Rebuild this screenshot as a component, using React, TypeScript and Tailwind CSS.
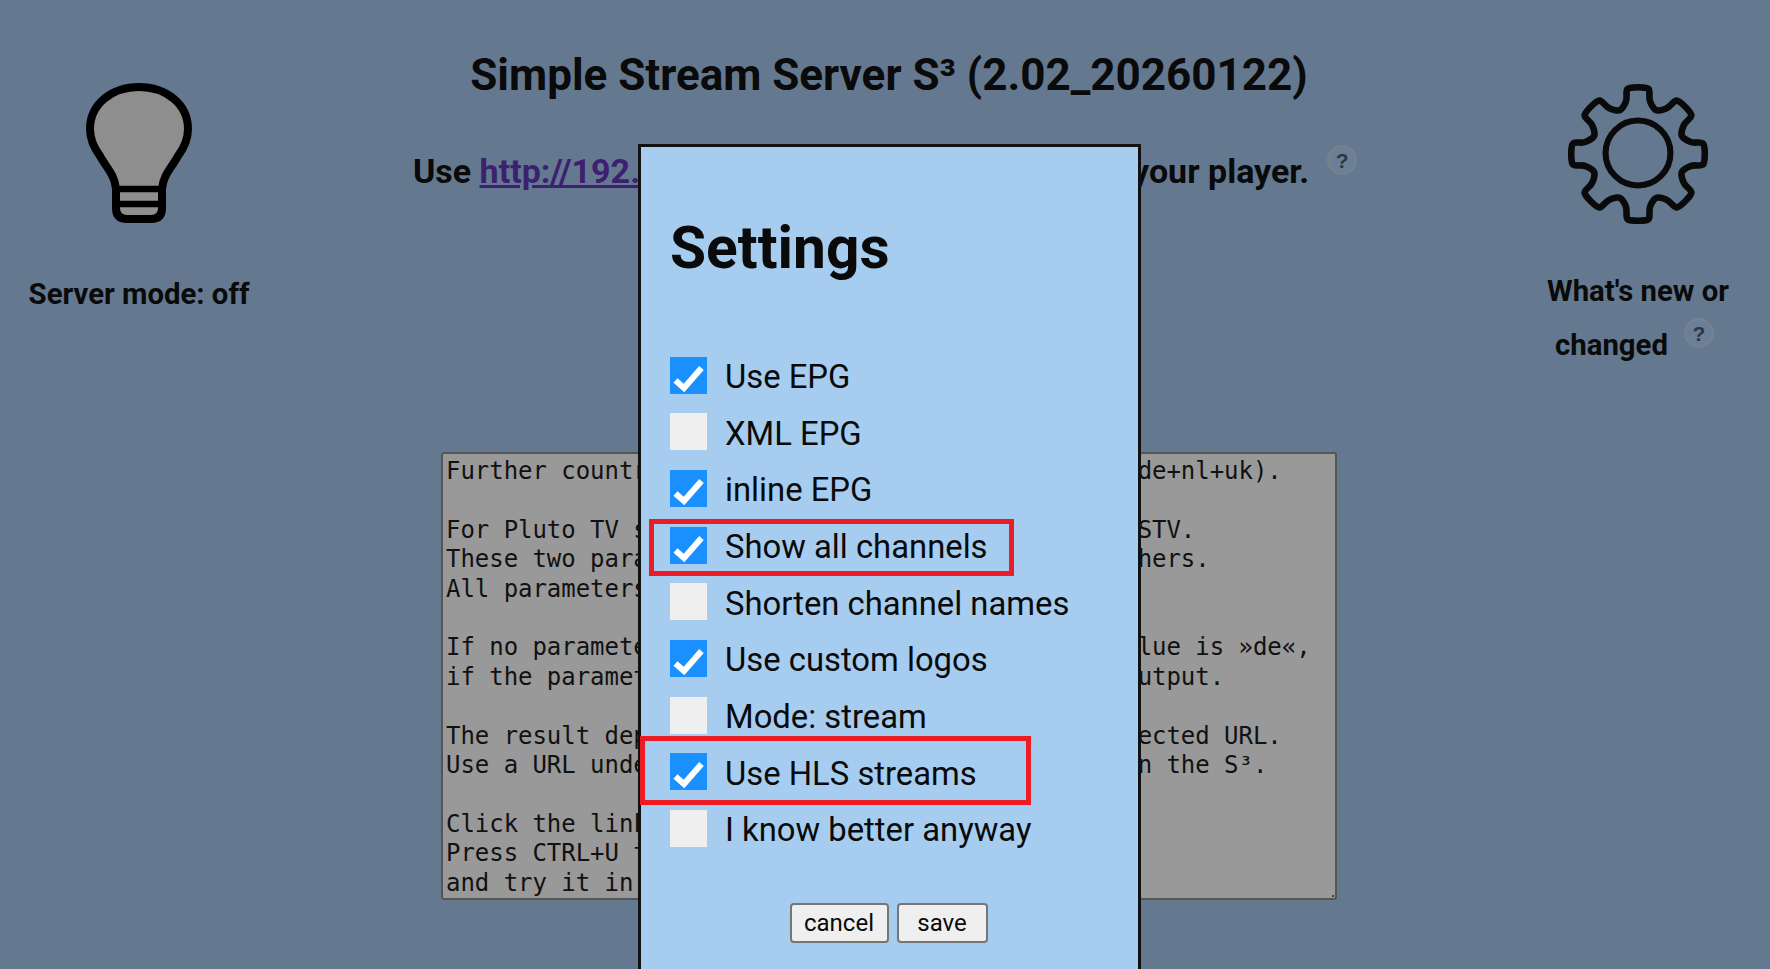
import React from "react";

const SERVER_HELP = `Further countries can be selected via URL (e.g. de+nl+uk).

For Pluto TV set parameters region and type for STV.
These two parameters can be combined with the others.
All parameters are optional.

If no parameter is given, the default country value is »de«,
if the parameter is invalid, you will get zero output.

The result depends on the parameters and the selected URL.
Use a URL under which the channels are running on the S³.

Click the link and view the source.
Press CTRL+U to see the source of the page
and try it in another browser.`;

const OPTIONS = [
  { label: "Use EPG", checked: true },
  { label: "XML EPG", checked: false },
  { label: "inline EPG", checked: true },
  { label: "Show all channels", checked: true },
  { label: "Shorten channel names", checked: false },
  { label: "Use custom logos", checked: true },
  { label: "Mode: stream", checked: false },
  { label: "Use HLS streams", checked: true },
  { label: "I know better anyway", checked: false },
];

// gear outline: polygon of polar points, corners smoothed with quadratics
function gearPath() {
  const c = 70;
  const pts: [number, number][] = [];
  const local: [number, number][] = [
    [46, -22.5],
    [49.5, -16],
    [55, -11.5],
    [63.5, -10.5],
    [66.5, -8],
    [66.5, 8],
    [63.5, 10.5],
    [55, 11.5],
    [49.5, 16],
  ];
  for (let i = 0; i < 8; i++) {
    const base = i * 45;
    local.forEach(([r, a]) => {
      const rad = ((base + a - 90) * Math.PI) / 180;
      pts.push([c + r * Math.cos(rad), c + r * Math.sin(rad)]);
    });
  }
  const mid = (a: [number, number], b: [number, number]) => [(a[0] + b[0]) / 2, (a[1] + b[1]) / 2];
  const start = mid(pts[pts.length - 1], pts[0]);
  let d = `M${start[0].toFixed(2)} ${start[1].toFixed(2)}`;
  pts.forEach((p, i) => {
    const m = mid(p, pts[(i + 1) % pts.length]);
    d += `Q${p[0].toFixed(2)} ${p[1].toFixed(2)} ${m[0].toFixed(2)} ${m[1].toFixed(2)}`;
  });
  return d + "Z";
}

function BulbIcon() {
  return (
    <svg width="106" height="140" viewBox="0 0 106 140" fill="none" stroke="#000" strokeWidth="8">
      <path
        fill="#8e8e8e"
        d="M30 106C29 92 20 84 14 73C8 65 4 56 4 46C4 21 26 4 53 4C80 4 102 21 102 46C102 56 98 65 92 73C86 84 77 92 76 106V125Q76 136 65 136H41Q30 136 30 125Z"
      />
      <path strokeWidth="6.500" d="M30 106H76M30 121H76" />
    </svg>
  );
}

function GearIcon() {
  return (
    <svg width="144" height="144" viewBox="-1 -1 142 142" fill="none" stroke="#0a0a0a" strokeWidth="6.500">
      <path d={gearPath()} />
      <circle cx="70" cy="69" r="32" strokeWidth="6" />
    </svg>
  );
}

function HelpBadge() {
  return (
    <span className="inline-flex h-[30px] w-[30px] shrink-0 items-center justify-center rounded-full border-2 border-[#76838f] bg-[#6b8097] font-['Liberation_Sans',sans-serif] text-[21px] font-bold leading-none text-[#2f3640]">
      ?
    </span>
  );
}

function OptionRow({ label, checked }: { label: string; checked: boolean }) {
  return (
    <div className="flex h-[56.67px] items-center gap-[18px]">
      <span
        className={
          checked
            ? "flex h-[37px] w-[37px] items-center justify-center bg-[#1a90ff]"
            : "flex h-[37px] w-[37px] items-center justify-center bg-[#efefef]"
        }
      >
        {checked && (
          <svg width="37" height="37" viewBox="0 0 37 37" fill="none" stroke="#fff" strokeWidth="6">
            <path d="M5.500 23.500L14 31L31.500 11" />
          </svg>
        )}
      </span>
      <span className="pt-[4px] text-[32.8px] leading-none text-[#0a0a0a]">{label}</span>
    </div>
  );
}

export default function App() {
  return (
    <div className="relative flex h-[969px] w-[1770px] overflow-hidden bg-[#64798f] font-['Roboto',sans-serif] text-[#0a0a0a]">
      <div className="flex w-[278px] shrink-0 flex-col items-center pt-[83px]">
        <BulbIcon />
        <p className="mt-[51px] text-[29.33px] font-bold leading-[40px]">Server mode: off</p>
      </div>

      <div className="flex w-[1222px] shrink-0 flex-col items-center">
        <h1 className="mt-[51px] text-[44px] font-bold leading-[48px]">
          Simple Stream Server S³ (2.02_20260122)
        </h1>
        <div className="mr-[8px] mt-[52px] flex items-start gap-[18px]">
          <p className="text-[34px] font-bold leading-[40px]">
            Use <a className="text-[#3d2070] underline">http://192.168.178.50:8000/</a> as playlist, in your player.
          </p>
          <span className="-mt-[6px]">
            <HelpBadge />
          </span>
        </div>
        <div className="relative mt-[261px] h-[448px] w-[896px] shrink-0">
          <textarea
            readOnly
            defaultValue={SERVER_HELP}
            className="h-full w-full resize-none overflow-hidden whitespace-pre rounded-[3px] border-2 border-[#555] bg-[#999] px-[3px] py-[3px] font-['DejaVu_Sans_Mono',monospace] text-[24px] leading-[29.4px] tracking-[-0.04px] text-[#111] outline-none"
          />
          <span className="absolute bottom-[3px] right-[3px] h-[2px] w-[2px] bg-[#444]" />
        </div>
      </div>

      <div className="flex w-[270px] shrink-0 flex-col items-center pl-[6px] pt-[82px]">
        <GearIcon />
        <p className="mt-[38px] text-center text-[29.33px] font-bold leading-[54px]">What's new or</p>
        <div className="mr-[7px] flex items-start gap-[16px]">
          <p className="text-[29.33px] font-bold leading-[54px]">changed</p>
          <HelpBadge />
        </div>
      </div>

      {/* settings dialog, runs off the bottom of the window */}
      <div className="absolute left-[638px] top-[144px] h-[900px] w-[503px] border-[3px] border-[#111] bg-[#a6cdef] pl-[29px] pt-[69px]">
        <h2 className="text-[58.67px] font-bold leading-[64px]">Settings</h2>
        <div className="mt-[67px]">
          {OPTIONS.map((o) => (
            <OptionRow key={o.label} label={o.label} checked={o.checked} />
          ))}
        </div>
        <div className="-ml-[31px] mt-[46px] flex justify-center gap-[8px]">
          <button className="h-[40px] w-[99px] rounded-[4px] border-2 border-[#767676] bg-[#efefef] text-[24px] leading-none text-[#0a0a0a]">
            cancel
          </button>
          <button className="h-[40px] w-[91px] rounded-[4px] border-2 border-[#767676] bg-[#efefef] text-[24px] leading-none text-[#0a0a0a]">
            save
          </button>
        </div>
      </div>

      {/* red annotation boxes drawn over the screenshot */}
      <div className="absolute left-[649px] top-[519px] h-[57px] w-[365px] border-[5px] border-[#ed1c24]" />
      <div className="absolute left-[640px] top-[736px] h-[69px] w-[391px] border-[5px] border-[#ed1c24]" />
    </div>
  );
}
